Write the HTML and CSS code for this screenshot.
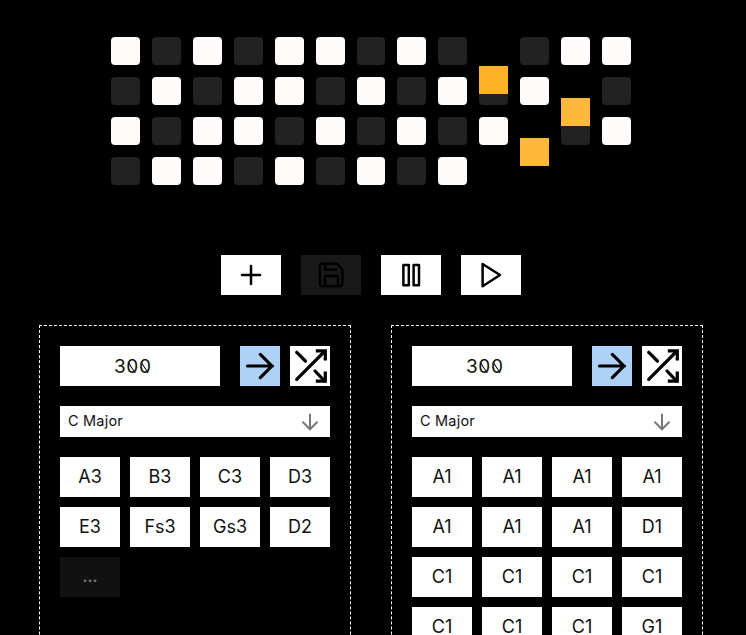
FILE: index.html
```
<!DOCTYPE html>
<html lang="en">
<head>
<meta charset="utf-8">
<title>Sequencer</title>
<link rel="stylesheet" href="styles.css">
</head>
<body>
<svg class="defs" aria-hidden="true">
  <symbol id="arrow" viewBox="0 0 24 24"><path d="M4.5 12h15M12.2 5l7 7-7 7"/></symbol>
  <symbol id="shuffle" viewBox="0 0 40 40"><path d="M6.7 33.3 34.5 5.5M6.7 6.3l8.7 8.7M25 25l9.5 9.8"/><path class="heads" d="M25.8 4.9h9.5v9.5M25.8 35.1h9.5v-9.5"/></symbol>
</svg>
<main>
  <div class="board" id="board"></div>
  <div class="controls">
    <button aria-label="Add"><svg viewBox="0 0 60 40"><path d="M30 11v18M21 20h18"/></svg></button>
    <button class="off" aria-label="Save"><svg viewBox="0 0 60 40"><path d="M21.2 8.7h14.5l5.7 5.7v14.5a2.3 2.3 0 0 1-2.3 2.3h-17.9a2.3 2.3 0 0 1-2.3-2.3v-17.9a2.3 2.3 0 0 1 2.3-2.3zM24 9v5.8h11.2M24 31v-10h13v10"/></svg></button>
    <button aria-label="Pause"><svg viewBox="0 0 60 40"><path d="M22.4 10h5.4v20.3h-5.4zM32.6 10h5.4v20.3h-5.4z"/></svg></button>
    <button aria-label="Play"><svg viewBox="0 0 60 40"><path d="M21.6 9v22.2L39 20z"/></svg></button>
  </div>
  <div class="tracks" id="tracks"></div>
</main>
<script src="app.js"></script>
</body>
</html>
```
FILE: styles.css
```
* { box-sizing: border-box; }
body { margin: 0; height: 635px; overflow: hidden; background: #000; color: #111; font-family: Inter, "Liberation Sans", sans-serif; }
main { display: flex; flex-direction: column; }
.defs { display: none; }
svg { fill: none; stroke: #000; stroke-width: 2; stroke-linecap: round; stroke-linejoin: round; display: block; }
.board { width: 520px; height: 148px; margin: 37px 0 70px 111px; display: grid; grid-template-columns: repeat(13, 1fr); grid-auto-rows: 28px; gap: 12px; }
.cell { position: relative; border-radius: 4px; }
.on { background: #fffbfa; }
.dim { background: #222; }
.falling { position: absolute; left: 0; width: 100%; height: 28px; background: #ffb83a; }
.bright { background: #ffb224; }
.controls { display: flex; gap: 20px; margin-left: 221px; }
.controls button { width: 60px; height: 40px; padding: 0; border: 0; background: #fff; }
.controls svg { width: 60px; height: 40px; stroke-width: 2.5; }
.controls .off { background: #191919; }
.tracks { display: flex; gap: 40px; margin: 30px 0 0 39px; }
.track { width: 312px; height: 400px; border: 1px dashed #fff; padding: 20px; display: flex; flex-direction: column; gap: 20px; flex: none; }
.head { display: flex; height: 40px; }
.tempo { width: 160px; background: #fff; display: flex; align-items: center; padding: 1px 0 0 54px; font-size: 19px; letter-spacing: .6px; }
.zero { position: relative; }
.zero::after { content: ""; position: absolute; left: 5.1px; top: 5.5px; width: 1.4px; height: 12.5px; background: #111; transform: rotate(-33deg); }
.square { width: 40px; height: 40px; background: #fff; }
.square svg { width: 40px; height: 40px; stroke-width: 3.2; }
.square.direction { margin-left: 20px; background: #afd1f7; }
.square.direction svg { stroke-width: 1.9; }
.heads { stroke-linecap: butt; stroke-linejoin: miter; }
.shuffle { margin-left: 10px; }
.scale { height: 31px; background: #fff; display: flex; align-items: center; justify-content: space-between; padding: 0 8px; font-size: 14.5px; letter-spacing: .2px; }
.scale span { padding-bottom: 2px; }
.scale svg { width: 24px; height: 24px; stroke: #777; transform: rotate(90deg); }
.notes { display: grid; grid-template-columns: repeat(4, 60px); grid-auto-rows: 40px; gap: 10px; }
.note { background: #fff; display: flex; align-items: center; justify-content: center; padding-bottom: 1px; font-size: 18px; }
.more { background: #111; color: #777; font-weight: 700; font-size: 15px; }
```
FILE: app.js
```
// 1 = lit, 0 = dim, . = empty
const rows = [
  '101011010.011',
  '01011010101.0',
  '1011010101.01',
  '011010101....'
];
// Keyed by row-column: vertical offset within the cell, and brightness
const falling = {
  '1-9': { top: -10.7, bright: true },
  '2-11': { top: -19 },
  '3-10': { top: -19 }
};
const states = { 1: 'on', 0: 'dim', '.': '' };
document.getElementById('board').innerHTML = rows.map((row, r) => [...row].map((c, i) => {
  const f = falling[`${r}-${i}`];
  const block = f ? `<span class="falling${f.bright ? ' bright' : ''}" style="top:${f.top}px"></span>` : '';
  return `<div class="cell ${states[c]}">${block}</div>`;
}).join('')).join('');

const tracks = [
  ['A3', 'B3', 'C3', 'D3', 'E3', 'Fs3', 'Gs3', 'D2', '...'],
  ['A1', 'A1', 'A1', 'A1', 'A1', 'A1', 'A1', 'D1', 'C1', 'C1', 'C1', 'C1', 'C1', 'C1', 'C1', 'G1']
];
document.getElementById('tracks').innerHTML = tracks.map(notes => `<section class="track">
  <div class="head"><div class="tempo">3<span class="zero">0</span><span class="zero">0</span></div>
  <div class="square direction"><svg><use href="#arrow"/></svg></div>
  <div class="square shuffle"><svg><use href="#shuffle"/></svg></div></div>
  <div class="scale"><span>C Major</span><svg><use href="#arrow"/></svg></div>
  <div class="notes">${notes.map(n => `<div class="note${n === '...' ? ' more' : ''}">${n}</div>`).join('')}</div>
</section>`).join('');
```
